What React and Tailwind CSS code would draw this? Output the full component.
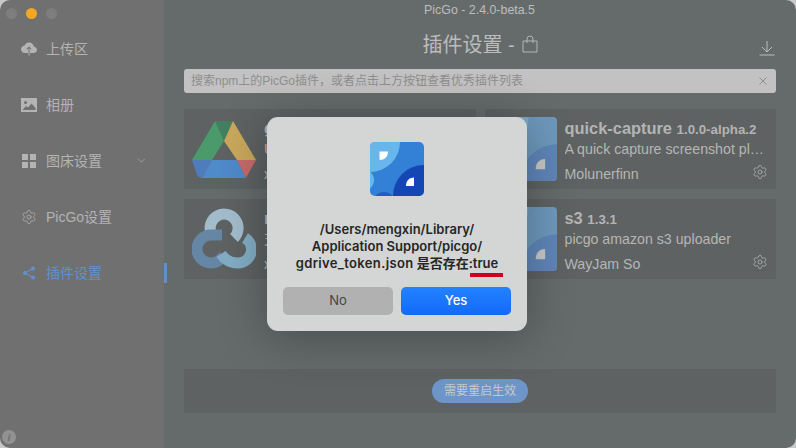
import { ChevronDown, Settings } from "lucide-react";
import { IoCloudUpload, IoShareSocial } from "react-icons/io5";

const font = "font-['Liberation_Sans','Noto_Sans_CJK_SC',sans-serif]";

function PicGoLogo({ className }) {
  return (
    <svg viewBox="0 0 54 54" className={className}>
      <rect width="54" height="54" fill="#3381d6" />
      <circle cx="0" cy="0" r="30" fill="#68b6ec" />
      <circle cx="-7" cy="38" r="11" fill="#68b6ec" />
      <circle cx="14" cy="61" r="11" fill="#1d5fc4" />
      <circle cx="54" cy="54" r="31" fill="#1447b3" />
      <path d="M9.5 9.5 H18 C18 14.5 14.5 18 9.5 18 Z" fill="#fff" />
      <path d="M44 44 V35.5 C39 35.5 36 39 36 44 Z" fill="#fff" />
    </svg>
  );
}

function FadedLogo({ className }) {
  return (
    <svg viewBox="0 0 54 54" className={className}>
      <rect width="54" height="54" fill="#6e98bb" />
      <circle cx="0" cy="0" r="30" fill="#84a9c6" />
      <circle cx="54" cy="54" r="31" fill="#5f86b8" />
      <path d="M44 44 V35.5 C39 35.5 36 39 36 44 Z" fill="#c8c8c8" />
    </svg>
  );
}

function DriveIcon() {
  return (
    <svg viewBox="0 0 64 57" className="w-16 h-[57px]">
      <path d="M23 0 H41 L32 20 Z" fill="#428060" />
      <path d="M23 0 L32 20 L20 39 H0 Z" fill="#4a9a6b" />
      <path d="M41 0 L64 39 H45 L32 20 Z" fill="#c9a85c" />
      <path d="M0 39 H20 L10 57 C8 57 6 56 5 54 Z" fill="#4f7cbb" />
      <path d="M20 39 H45 L54 57 H10 Z" fill="#4f8acb" />
      <path d="M45 39 H64 L55 55 L54 57 Z" fill="#c76a6a" />
    </svg>
  );
}

function RcloneIcon() {
  return (
    <svg viewBox="0 0 64 64" className="w-16 h-16" fill="none" strokeWidth="11">
      <path d="M19 26 A14 14 0 1 1 42 31" stroke="#a3bccc" />
      <path d="M30 28 H19 A14 14 0 0 0 19 56 C25 56 29 53 32 48" stroke="#6686a6" />
      <path d="M29 47 C33 53 39 56 46 56 A13.5 13.5 0 0 0 53 31" stroke="#82adc4" />
    </svg>
  );
}

function ImageIcon() {
  return (
    <svg viewBox="0 0 16 14" className="w-4 h-[14px]">
      <path
        fillRule="evenodd"
        fill="currentColor"
        d="M0 0 H16 V14 H0 Z M4.5 3 A1.5 1.5 0 1 0 4.5 6 A1.5 1.5 0 1 0 4.5 3 Z M1.5 12 H14.5 V10 L10.5 5.5 L7 9.5 L5 8 Z"
      />
    </svg>
  );
}

function NavItem({ icon, label, active, chevron }) {
  return (
    <div className={`relative h-14 flex items-center pl-[21px] ${active ? "text-[#6291c9]" : "text-[#b4b4b4]"}`}>
      <span className="w-4 h-4 flex items-center justify-center mr-[9px]">{icon}</span>
      <span className="text-sm">{label}</span>
      {chevron && <ChevronDown size={13} strokeWidth={1.2} className="absolute left-[135px] top-[21px]" />}
      {active && <span className="absolute right-[-3px] top-[18px] w-[3px] h-5 bg-[#6291c9]" />}
    </div>
  );
}

function PluginCard({ icon, title, version, desc, author }) {
  return (
    <div className="h-20 bg-[#5e6262] p-2 flex gap-2 overflow-hidden">
      <div className="w-16 h-16 shrink-0 flex items-center justify-center">{icon}</div>
      <div className="min-w-0 flex-1 text-[#b6b6b6]">
        <div className="h-[22px] truncate text-[16.4px] font-bold leading-[22px] text-[#b4b4b4]">
          {title} <span className="text-[13.3px]">{version}</span>
        </div>
        <div className="h-[21px] truncate text-[14.2px] leading-[21px]">{desc}</div>
        <div className="flex items-center justify-between pt-1">
          <span className="text-[14.2px] leading-5">{author}</span>
          <Settings size={16} strokeWidth={1.1} className="mb-1" />
        </div>
      </div>
    </div>
  );
}

export default function App() {
  return (
    <div className={`relative w-[796px] h-[448px] overflow-hidden bg-[#c9c9c9] ${font}`}>
      <div className="flex h-full rounded-[10px] overflow-hidden">
        {/* SIDEBAR */}
        <aside className="relative z-10 w-[164px] shrink-0 bg-[#707070] flex flex-col">
          <div className="flex gap-[9px] pl-[6px] pt-[8px] h-[21px]">
            <span className="w-[11px] h-[11px] rounded-full bg-[#7e7e7e]" />
            <span className="w-[11px] h-[11px] rounded-full bg-[#f5a623]" />
            <span className="w-[11px] h-[11px] rounded-full bg-[#7e7e7e]" />
          </div>
          <div>
            <NavItem icon={<IoCloudUpload size={18} />} label="上传区" />
            <NavItem icon={<ImageIcon />} label="相册" />
            <NavItem
              label="图床设置"
              chevron
              icon={
                <span className="grid grid-cols-2 gap-[2px]">
                  <i className="w-[6px] h-[6px] bg-[#b4b4b4]" />
                  <i className="w-[6px] h-[6px] bg-[#b4b4b4]" />
                  <i className="w-[6px] h-[6px] bg-[#b4b4b4]" />
                  <i className="w-[6px] h-[6px] bg-[#b4b4b4]" />
                </span>
              }
            />
            <NavItem icon={<Settings size={18} strokeWidth={1.1} />} label="PicGo设置" />
            <NavItem icon={<IoShareSocial size={16} />} label="插件设置" active />
          </div>
          <span className="absolute left-[2px] bottom-[4px] w-[14px] h-[14px] rounded-full bg-[#929292] text-[#6f6f6f] text-[11px] leading-[14px] text-center italic font-bold font-['Liberation_Serif',serif]">
            i
          </span>
        </aside>

        {/* MAIN */}
        <main className="flex-1 bg-[#656b6b] relative px-5">
          <div className="h-[22px] pr-[1px] text-center text-[12.4px] leading-[20px] text-[#bdbdbd]">PicGo - 2.4.0-beta.5</div>
          <div className="relative h-[47px] flex items-center justify-center pb-[1px] text-[#bcbcbc]">
            <span className="text-xl">插件设置 -</span>
            <svg viewBox="0 0 16 18" className="w-4 h-[18px] ml-[7px] mb-[2px]" fill="none" stroke="currentColor" strokeWidth="0.9">
              <path d="M1 6 H15 V17 H1 Z M5 8 V4 A3 3 0 0 1 11 4 V8" />
            </svg>
            <svg viewBox="0 0 16 16" className="absolute right-[1px] top-[18px] w-4 h-4" fill="none" stroke="currentColor" strokeWidth="1">
              <path d="M8 1 V11 M3 7 L8 12 L13 7 M0.5 15 H15.5" />
            </svg>
          </div>
          <div className="h-6 rounded-[3px] bg-[#c2c2c2] flex items-center justify-between pl-[7px] pr-[9px] text-xs text-[#8e8e8e]">
            <span>搜索npm上的PicGo插件，或者点击上方按钮查看优秀插件列表</span>
            <svg viewBox="0 0 8 8" className="w-2 h-2" stroke="currentColor" strokeWidth="1">
              <path d="M0.5 0.5 L7.5 7.5 M7.5 0.5 L0.5 7.5" />
            </svg>
          </div>

          <div className="grid grid-cols-2 gap-x-[9px] gap-y-[10px] mt-[16px]">
            <PluginCard icon={<DriveIcon />} title="gdrive-uploader" version="1.0.0" desc="Upload to Google Drive" author="xiaomengxin" />
            <PluginCard
              icon={<FadedLogo className="w-16 h-16 rounded-[4px]" />}
              title="quick-capture"
              version="1.0.0-alpha.2"
              desc="A quick capture screenshot plugin for PicGo"
              author="Molunerfinn"
            />
            <PluginCard icon={<RcloneIcon />} title="rclone" version="1.0.0" desc="支持rclone上传" author="xiaomengxin" />
            <PluginCard
              icon={<FadedLogo className="w-16 h-16 rounded-[4px]" />}
              title="s3"
              version="1.3.1"
              desc="picgo amazon s3 uploader"
              author="WayJam So"
            />
          </div>

          <div className="mt-[90px] h-11 bg-[#5e6262] flex items-center justify-center">
            <span className="w-24 h-6 rounded-full bg-[#6d95ca] text-center text-xs leading-6 text-[#c7c7c7]">需要重启生效</span>
          </div>
        </main>
      </div>

      {/* DIALOG */}
      <div className="absolute z-20 left-[267px] top-[117px] w-[260px] h-[214px] rounded-[11px] bg-[#d3d6d5] shadow-[0_6px_48px_rgba(0,0,0,0.3)] px-4 pt-[25px] flex flex-col items-center font-['Inter','Noto_Sans_CJK_SC',sans-serif]">
        <PicGoLogo className="w-[54px] h-[54px] rounded-[5px] shrink-0" />
        <div className="relative mt-[25px] text-center text-[13px] leading-[17px] font-semibold text-[#262626] whitespace-nowrap">
          <div>/Users/mengxin/Library/</div>
          <div>Application Support/picgo/</div>
          <div>
            <span className="tracking-[0.35px]">gdrive_token.json</span> 是否存在:true
          </div>
          <span className="absolute right-[-5px] bottom-[-5px] w-[33px] h-1 bg-[#d0021b]" />
        </div>
        <div className="w-full grid grid-cols-2 gap-2 mt-[15px]">
          <button className="h-7 rounded-[5px] bg-[#b1b1b1] text-[13px] text-[#444]">No</button>
          <button className="h-7 rounded-[5px] bg-gradient-to-b from-[#2283ff] to-[#1668fb] text-[13px] font-medium text-white">Yes</button>
        </div>
      </div>
    </div>
  );
}
